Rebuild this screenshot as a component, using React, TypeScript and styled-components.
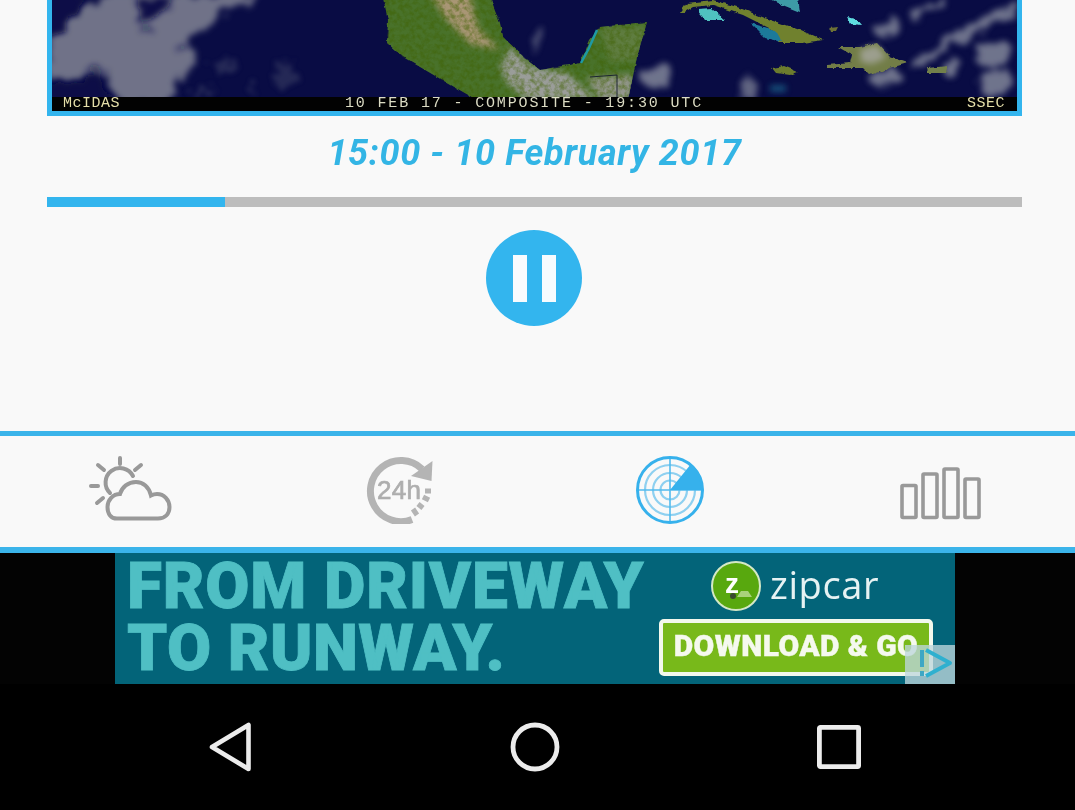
import React from "react";
import styled, { createGlobalStyle } from "styled-components";

const Global = createGlobalStyle`
  html, body { margin: 0; padding: 0; background: #000; }
  * { box-sizing: border-box; }
`;

const Page = styled.div`
  width: 1075px;
  height: 810px;
  overflow: hidden;
  display: flex;
  flex-direction: column;
  background: #f9f9f9;
  font-family: Roboto, "Liberation Sans", sans-serif;
`;

const Content = styled.main`
  height: 431px;
  padding: 0 53px 0 47px;
  display: flex;
  flex-direction: column;
`;

const MapFrame = styled.figure`
  margin: 0;
  height: 116px;
  border: 5px solid #33b5ee;
  border-top: 0;
  display: flex;
  flex-direction: column;
  background: #000;
`;

const MapPicture = styled.svg`
  display: block;
  width: 965px;
  height: 97px;
  flex: none;
`;

const Caption = styled.figcaption`
  height: 14px;
  padding: 0 12px 0 11px;
  display: flex;
  justify-content: space-between;
  align-items: center;
  background: #020202;
  color: #e5dfa9;
  font-family: "Liberation Mono", monospace;
  font-size: 15px;
  line-height: 14px;
  letter-spacing: 0.5px;
`;

const CaptionCentre = styled.span`
  letter-spacing: 1.85px;
  margin-right: 39px;
  color: #dcdcc4;
`;

const TimeLabel = styled.div`
  height: 72px;
  padding-top: 2px;
  display: flex;
  align-items: center;
  justify-content: center;
  color: #33b5e5;
  font-style: italic;
  font-weight: 700;
  font-size: 36px;
  letter-spacing: 0.65px;
  white-space: pre;
`;

const Track = styled.div`
  height: 10px;
  margin-top: 9px;
  background: #bdbdbd;
`;

const Fill = styled.div`
  height: 100%;
  background: #33b5ee;
`;

const PauseButton = styled.button`
  width: 96px;
  height: 96px;
  margin: 23px 0 0 439px;
  padding: 0;
  border: 0;
  border-radius: 50%;
  background: #33b5ee;
  display: flex;
  align-items: center;
  justify-content: center;
  gap: 15px;
`;

const PauseBar = styled.span`
  width: 14px;
  height: 47px;
  background: #f7fbfe;
`;

const Tabs = styled.nav`
  height: 122px;
  flex: none;
  border-top: 5px solid #3bb4ea;
  border-bottom: 6px solid #3bb4ea;
  background: #f9f9f9;
  display: grid;
  grid-template-columns: repeat(4, 270px);
  margin-right: -10px;
  margin-left: -5px;
  align-items: center;
  justify-items: center;
`;

const TabIcon = styled.svg<{ $dy: number }>`
  display: block;
  transform: translateY(${(p) => p.$dy}px);
`;

const AdRow = styled.div`
  height: 131px;
  flex: none;
  background: #030303;
  padding-left: 115px;
  display: flex;
`;

const Ad = styled.div`
  position: relative;
  width: 840px;
  height: 131px;
  background: #036479;
  display: grid;
  grid-template-columns: 544px 1fr;
`;

const Headline = styled.div`
  padding: 0 0 0 12px;
  color: #4fbfc4;
  font-family: Roboto, "Liberation Sans", sans-serif;
  font-weight: 900;
  font-size: 64px;
  line-height: 62px;
  white-space: nowrap;
  -webkit-text-stroke: 0.8px #4fbfc4;
`;

const HeadLine1 = styled.div`
  letter-spacing: 0.8px;
  margin-top: 3px;
`;

const HeadLine2 = styled.div`
  letter-spacing: 0.4px;
`;

const AdSide = styled.div`
  display: flex;
  flex-direction: column;
  align-items: flex-start;
`;

const Brand = styled.div`
  height: 66px;
  margin-left: 52px;
  display: flex;
  align-items: center;
  gap: 9px;
  color: #e6f2f3;
  font-family: "Open Sans", sans-serif;
  font-weight: 500;
  font-size: 38px;
  letter-spacing: 0.6px;
  padding-bottom: 4px;
`;

const BrandBadge = styled.div`
  position: relative;
  width: 50px;
  height: 50px;
  margin-top: 4px;
  border-radius: 50%;
  border: 2px solid #d4e8c6;
  background: #58a80e;
  display: flex;
  align-items: center;
  justify-content: center;
  color: #fff;
  font-family: "Liberation Sans", sans-serif;
  font-weight: 700;
  font-size: 28px;
  letter-spacing: 0;
  padding: 0 8px 4px 0;
`;

const BadgeCar = styled.svg`
  position: absolute;
  left: 14px;
  bottom: 9px;
`;

const DownloadButton = styled.div`
  width: 274px;
  height: 57px;
  padding-bottom: 4px;
  border: 4px solid #f3f8ec;
  border-radius: 5px;
  background: #78b91a;
  color: #f5f9ee;
  display: flex;
  align-items: center;
  justify-content: center;
  font-family: Roboto, "Liberation Sans", sans-serif;
  font-weight: 900;
  font-size: 30px;
  letter-spacing: 0.4px;
  white-space: nowrap;
  -webkit-text-stroke: 0.4px #f5f9ee;
`;

const AdChoice = styled.div`
  position: absolute;
  right: 0;
  bottom: 0;
  width: 50px;
  height: 39px;
  background: rgba(190, 214, 220, 0.78);
  display: flex;
  align-items: center;
  justify-content: flex-end;
  padding: 0 2px 3px 0;
`;

const SystemBar = styled.footer`
  flex: 1;
  background: #000;
  display: grid;
  grid-template-columns: repeat(3, 304px);
  justify-content: center;
  align-items: center;
  justify-items: center;
  padding-right: 5px;
`;

const SysIcon = styled.svg`
  display: block;
`;

const SunCloud = () => (
  <TabIcon $dy={-3} width="84" height="68" viewBox="-1 -1 84 68" fill="none" stroke="#999" strokeWidth="4" strokeLinecap="round">
    <path d="M28 62.5H69C76 62.5 80.5 58 80.5 51C80.5 44 75 38 68 38C66 38 64 38.5 62 39.5C60 31 54 26 47 26C39 26 33 31 31 38C24 38 18.5 44 18.5 51C18.5 58 22 62.5 28 62.5Z" />
    <path d="M21 37A14.5 14.5 0 1 1 44 20" />
    <path d="M31 2V8M9 9L15 14M46 14L52 9M2 30H9M8 47L14 42" />
  </TabIcon>
);

const Dial24 = () => (
  <TabIcon $dy={-2} width="68" height="68" viewBox="367 457 68 68" fill="none">
    <path d="M413 520.5A30.5 30.5 0 1 1 423 470" stroke="#b4b4b4" strokeWidth="7" />
    <path d="M433.500 462L432.500 482L412 477Z" fill="#b4b4b4" />
    <text x="378" y="500" fill="#aeaeae" stroke="#aeaeae" strokeWidth="0.7" fontFamily="'Liberation Sans', sans-serif" fontSize="26" textLength="44">24h</text>
    <path d="M426 492H432M424 498L430 501M419 505L424 509M414 510L418 516" stroke="#b4b4b4" strokeWidth="5" />
  </TabIcon>
);

const Radar = () => (
  <TabIcon $dy={-2} width="68" height="68" viewBox="636 457 68 68" fill="none">
    <g stroke="#8ed0f0" strokeWidth="2.2">
      <circle cx="670" cy="491" r="25" />
      <circle cx="670" cy="491" r="17" />
      <circle cx="670" cy="491" r="9.500" />
    </g>
    <path d="M670 458V524M637 491H703" stroke="#52bbee" strokeWidth="1.6" />
    <path d="M670 491L691 465A33 33 0 0 1 703 491Z" fill="#36b1ec" />
    <circle cx="670" cy="491" r="32.5" stroke="#36b1ec" strokeWidth="3" />
  </TabIcon>
);

const Bars = () => (
  <TabIcon $dy={2} width="82" height="53" viewBox="899 467 82 53" fill="none" stroke="#999" strokeWidth="3.6">
    <rect x="902" y="485.500" width="14" height="32" rx="1" />
    <rect x="923" y="474" width="14" height="43.5" rx="1" />
    <rect x="944" y="469" width="14" height="48.5" rx="1" />
    <rect x="965" y="479" width="14" height="38.5" rx="1" />
  </TabIcon>
);

const LAND = "M383 -3L388 20L387 43L403 57L437 77L477 100H628L637 57L647 22L600 27L590 40L580 63L540 70L527 60L503 37L500 23L490 -3Z";

const Satellite = () => (
  <MapPicture viewBox="52 0 965 97" preserveAspectRatio="none">
    <defs>
      <filter id="cloud" filterUnits="userSpaceOnUse" x="0" y="-20" width="1075" height="140">
        <feTurbulence type="fractalNoise" baseFrequency="0.07" numOctaves="4" seed="4" result="n" />
        <feDisplacementMap in="SourceGraphic" in2="n" scale="20" xChannelSelector="R" yChannelSelector="G" />
        <feGaussianBlur stdDeviation="3.2" />
      </filter>
      <filter id="haze" filterUnits="userSpaceOnUse" x="0" y="-20" width="1075" height="140">
        <feTurbulence type="fractalNoise" baseFrequency="0.12" numOctaves="3" seed="9" result="n" />
        <feDisplacementMap in="SourceGraphic" in2="n" scale="26" xChannelSelector="G" yChannelSelector="R" />
        <feGaussianBlur stdDeviation="2.500" />
      </filter>
      <filter id="soft2" filterUnits="userSpaceOnUse" x="0" y="-20" width="1075" height="140"><feGaussianBlur stdDeviation="3" /></filter>
      <filter id="coast" filterUnits="userSpaceOnUse" x="0" y="-20" width="1075" height="140">
        <feTurbulence type="fractalNoise" baseFrequency="0.15" numOctaves="3" seed="2" result="n" />
        <feDisplacementMap in="SourceGraphic" in2="n" scale="4" xChannelSelector="R" yChannelSelector="G" />
        <feGaussianBlur stdDeviation="0.7" />
      </filter>
      <filter id="grain" x="0" y="0" width="100%" height="100%">
        <feTurbulence type="fractalNoise" baseFrequency="0.2" numOctaves="3" seed="7" />
        <feColorMatrix values="0 0 0 0 0.05  0 0 0 0 0.12  0 0 0 0 0  2.6 0 0 0 -0.95" />
      </filter>
      <clipPath id="mexico"><path d={LAND} /></clipPath>
    </defs>
    <rect x="52" y="0" width="965" height="97" fill="#090c44" />
    <path d="M48 34L85 6L120 -6H262L220 17L187 43L197 63L180 80L167 104H124L104 77H48Z" fill="#6f7288" filter="url(#cloud)" />
    <g fill="#0c1046" filter="url(#cloud)">
      <path d="M40 -8H92L54 34H40Z" />
      <path d="M140 -2L174 -4L160 16L142 20Z" />
      <path d="M40 84L100 80L120 104H40Z" />
      <ellipse cx="148" cy="30" rx="7" ry="4" opacity="0.5" />
      <ellipse cx="182" cy="48" rx="9" ry="4" opacity="0.5" />
      <ellipse cx="96" cy="72" rx="11" ry="3" opacity="0.6" />
    </g>
    <g fill="#3f4468" filter="url(#haze)" opacity="0.5">
      <ellipse cx="225" cy="65" rx="12" ry="5" />
      <ellipse cx="285" cy="76" rx="12" ry="13" />
      <ellipse cx="250" cy="90" rx="7" ry="4" />
      <ellipse cx="205" cy="92" rx="14" ry="4" />
    </g>
    <g fill="#7c8095" filter="url(#cloud)" opacity="0.9">
      <path d="M873 26L898 18L900 30L878 36Z" />
      <path d="M908 14L955 -6L942 4L915 18Z" />
      <path d="M908 66L950 34L1016 2L1018 12L955 44L920 66Z" />
      <ellipse cx="995" cy="54" rx="16" ry="12" />
      <ellipse cx="950" cy="67" rx="7" ry="11" />
      <ellipse cx="885" cy="78" rx="17" ry="7" />
      <ellipse cx="995" cy="84" rx="16" ry="14" />
      <ellipse cx="750" cy="90" rx="11" ry="10" opacity="0.85" />
      <ellipse cx="656" cy="76" rx="16" ry="11" />
      <ellipse cx="538" cy="38" rx="2.500" ry="13" transform="rotate(18 538 38)" opacity="0.7" />
    </g>
    <g filter="url(#coast)">
      <path d={LAND} fill="#4a722c" />
      <path d="M680 13L687 3L713 0L737 7L770 20L800 30L823 40L803 43L780 43L773 30L743 15L713 5L693 7L683 13Z" fill="#6f812f" />
      <path d="M838 47L860 47L877 43L890 57L908 63L890 68L870 75L863 68L827 68L827 65L850 63L852 55Z" fill="#727d47" />
      <path d="M772 68L784 66L798 72L790 75L776 73Z" fill="#6c7c2d" />
      <path d="M927 68L948 66L946 73L928 73Z" fill="#72804c" />
      <path d="M830 28L838 27L836 31L831 31Z" fill="#6d7136" />
    </g>
    <path d="M860 50L877 45L886 58L872 64L861 62Z" fill="#9c9f8e" filter="url(#soft2)" />
    <g clipPath="url(#mexico)">
      <path d="M430 -6H470L478 28L500 50L470 44L445 18Z" fill="#a99674" filter="url(#soft2)" />
      <path d="M600 27H647L640 60L610 62Z" fill="#5f7d3f" filter="url(#soft2)" />
      <path d="M500 67L510 47L533 67L567 73L597 100H527L507 83Z" fill="#9a9d99" filter="url(#soft2)" />
      <path d="M587 78L632 75V100H600Z" fill="#94978d" filter="url(#soft2)" />
      <rect x="380" y="0" width="270" height="97" filter="url(#grain)" opacity="0.5" />
    </g>
    <path d="M597 30L589 48L581 63" stroke="#1e99a4" strokeWidth="2.500" fill="none" />
    <path d="M590 77L617 75V97" stroke="#1c2530" strokeWidth="1" fill="none" />
    <path d="M697 10L712 9L725 20L705 20Z" fill="#4fc2c0" filter="url(#coast)" />
    <path d="M750 23L775 30L782 42L765 38Z" fill="#1f7a9a" filter="url(#coast)" />
    <path d="M767 -2H798L800 12L785 6Z" fill="#3e9aa6" filter="url(#coast)" />
    <path d="M847 17L856 19L861 25L851 24Z" fill="#5fdde0" filter="url(#coast)" />
    <rect x="770" y="85" width="16" height="7" fill="#1f6a90" filter="url(#soft2)" opacity="0.7" />
  </MapPicture>
);

export default function App() {
  return (
    <Page>
      <Global />
      <Content>
        <MapFrame>
          <Satellite />
          <Caption>
            <span>McIDAS</span>
            <CaptionCentre>10 FEB 17 - COMPOSITE - 19:30 UTC</CaptionCentre>
            <span>SSEC</span>
          </Caption>
        </MapFrame>
        <TimeLabel>15:00 - 10 February 2017</TimeLabel>
        <Track>
          <Fill style={{ width: `${(178 / 975) * 100}%` }} />
        </Track>
        <PauseButton aria-label="Pause">
          <PauseBar />
          <PauseBar />
        </PauseButton>
      </Content>
      <Tabs>
        <SunCloud />
        <Dial24 />
        <Radar />
        <Bars />
      </Tabs>
      <AdRow>
        <Ad>
          <Headline>
            <HeadLine1>FROM DRIVEWAY</HeadLine1>
            <HeadLine2>TO RUNWAY.</HeadLine2>
          </Headline>
          <AdSide>
            <Brand>
              <BrandBadge>
                z
                <BadgeCar width="26" height="12" viewBox="0 0 26 12">
                  <circle cx="6" cy="8" r="3" fill="#3a4a30" />
                  <path d="M10 9L14 3H21L25 9Z" fill="#a9d27c" />
                </BadgeCar>
              </BrandBadge>
              zipcar
            </Brand>
            <DownloadButton>DOWNLOAD &amp; GO</DownloadButton>
          </AdSide>
          <AdChoice>
            <svg width="36" height="32" viewBox="0 0 36 32" fill="none" stroke="#2fb0cf" strokeWidth="4" strokeLinejoin="round">
              <path d="M5 3V29" stroke="#3ea7c4" strokeDasharray="17 4" />
              <path d="M9 3L33 16L9 29" />
            </svg>
          </AdChoice>
        </Ad>
      </AdRow>
      <SystemBar>
        <SysIcon width="44" height="50" viewBox="0 0 44 50" fill="none" stroke="#ececec" strokeWidth="4.6" strokeLinejoin="round">
          <path d="M39.5 3V47L3 25Z" />
        </SysIcon>
        <SysIcon width="50" height="50" viewBox="0 0 50 50" fill="none" stroke="#ececec" strokeWidth="4.8">
          <circle cx="25" cy="25" r="22" />
        </SysIcon>
        <SysIcon width="44" height="44" viewBox="0 0 44 44" fill="none" stroke="#ececec" strokeWidth="4.8" strokeLinejoin="round">
          <rect x="2.4" y="2.4" width="39.2" height="39.2" rx="1" />
        </SysIcon>
      </SystemBar>
    </Page>
  );
}
